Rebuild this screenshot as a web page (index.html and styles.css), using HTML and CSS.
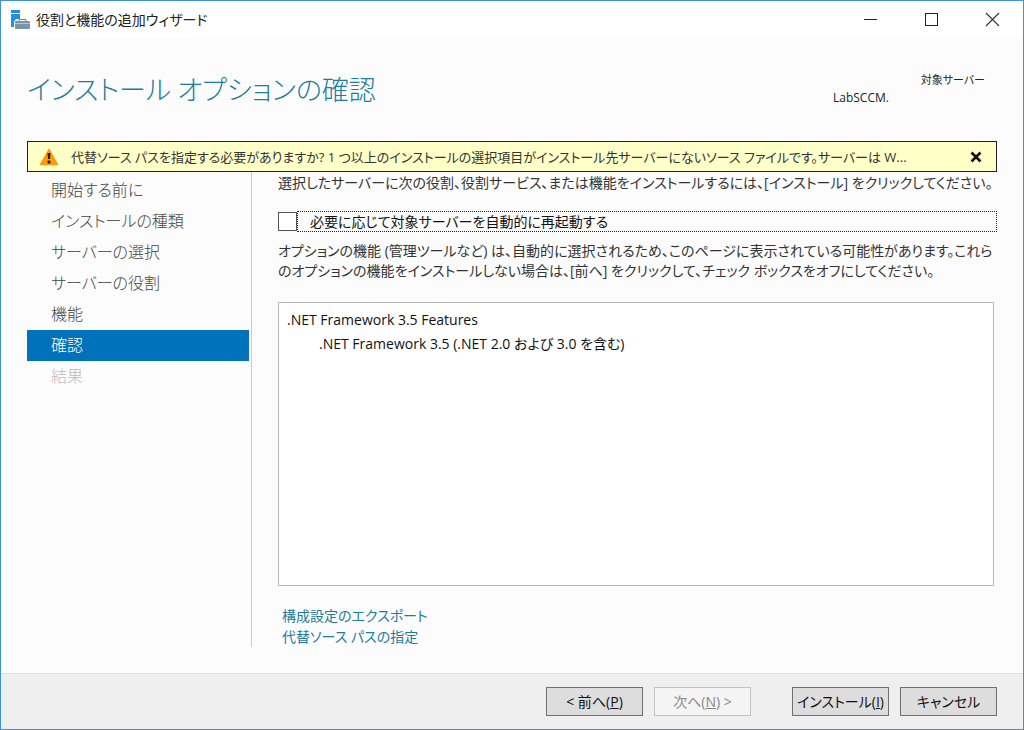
FILE: index.html
```html
<!DOCTYPE html>
<html lang="ja">
<head>
<meta charset="utf-8">
<meta name="viewport" content="width=device-width, initial-scale=1">
<title>役割と機能の追加ウィザード</title>
<link rel="stylesheet" href="styles.css">
</head>
<body>
<div class="window">
  <header class="titlebar">
    <svg class="app-icon" width="20" height="20" viewBox="0 0 20 20" aria-hidden="true">
      <rect x="0" y="0" width="9" height="3" fill="#1f8fe0"/>
      <path d="M0 4h9v5H5l-2 3v5H0z" fill="#1f8fe0"/>
      <path d="M8 11V9.500h7V11" fill="none" stroke="#6b8799"/>
      <rect x="4" y="11" width="15" height="8" rx="1" fill="#7895a8"/>
      <path d="M4 13.500h15" stroke="#b4c6d2"/>
    </svg>
    <span class="window-title">役割と機能の追加ウィザード</span>
    <div class="window-controls">
      <button type="button" aria-label="最小化"><svg width="15" height="15" viewBox="0 0 15 15"><path d="M1 7.500h13" stroke="#222" fill="none"/></svg></button>
      <button type="button" aria-label="最大化"><svg width="15" height="15" viewBox="0 0 15 15"><rect x="1.500" y="1.500" width="12" height="12" stroke="#222" fill="none"/></svg></button>
      <button type="button" aria-label="閉じる"><svg width="15" height="15" viewBox="0 0 15 15"><path d="M1 1l13 13M14 1L1 14" stroke="#333" stroke-width="1.100" fill="none"/></svg></button>
    </div>
  </header>

  <main class="page">
    <div class="heading">
      <h1>インストール オプションの確認</h1>
      <div class="target">
        <span class="target-label">対象サーバー</span>
        <span class="target-name">LabSCCM.</span>
      </div>
    </div>

    <div class="notice" role="alert">
      <svg width="20" height="18" viewBox="0 0 20 18" aria-hidden="true">
        <path d="M10 1.500L18.500 16.500H1.500z" fill="#ff9a0a" stroke="#ff9a0a" stroke-width="1.500" stroke-linejoin="round"/>
        <path d="M8.500 5h3l-.5 6H9z" fill="#222"/>
        <rect x="8.500" y="12.500" width="3" height="3" rx="1" fill="#222"/>
      </svg>
      <span class="notice-text">代替ソース パスを指定する必要がありますか? 1 つ以上のインストールの選択項目がインストール先サーバーにないソース ファイルです。サーバーは W...</span>
      <button type="button" class="notice-close" aria-label="通知を閉じる"><svg width="12" height="12" viewBox="0 0 12 12"><path d="M1.500 1.500l9 9M10.500 1.500l-9 9" stroke="#111" stroke-width="2.600"/></svg></button>
    </div>

    <div class="columns">
      <nav class="steps">
        <a href="#">開始する前に</a>
        <a href="#">インストールの種類</a>
        <a href="#">サーバーの選択</a>
        <a href="#">サーバーの役割</a>
        <a href="#">機能</a>
        <a href="#" class="current" aria-current="step">確認</a>
        <a class="disabled" aria-disabled="true">結果</a>
      </nav>
      <section class="content">
        <p class="intro">選択したサーバーに次の役割、役割サービス、または機能をインストールするには、[インストール] をクリックしてください。</p>
        <div class="restart">
          <input type="checkbox" id="restart">
          <label for="restart">必要に応じて対象サーバーを自動的に再起動する</label>
        </div>
        <p class="note">オプションの機能 (管理ツールなど) は、自動的に選択されるため、このページに表示されている可能性があります。これら<br>のオプションの機能をインストールしない場合は、[前へ] をクリックして、チェック ボックスをオフにしてください。</p>
        <ul class="features">
          <li>.NET Framework 3.5 Features
            <ul><li>.NET Framework 3.5 (.NET 2.0 および 3.0 を含む)</li></ul>
          </li>
        </ul>
        <div class="links">
          <a href="#">構成設定のエクスポート</a>
          <a href="#">代替ソース パスの指定</a>
        </div>
      </section>
    </div>
  </main>

  <footer class="actions">
    <div class="group">
      <button type="button">&lt; 前へ(<u>P</u>)</button>
      <button type="button" disabled>次へ(<u>N</u>) &gt;</button>
    </div>
    <div class="group">
      <button type="button">インストール(<u>I</u>)</button>
      <button type="button">キャンセル</button>
    </div>
  </footer>
</div>
</body>
</html>
```
FILE: styles.css
```css
* { box-sizing: border-box; }

body {
  margin: 0;
  color: #333;
  font-family: "Open Sans", "Noto Sans CJK JP", sans-serif;
  font-size: 14px;
  line-height: 20px;
  font-feature-settings: "palt";
}

button {
  font: inherit;
  font-feature-settings: inherit;
  color: inherit;
}

p, h1, ul { margin: 0; padding: 0; }
ul { list-style: none; }
a { text-decoration: none; }
svg { display: block; flex: none; }

.window {
  display: flex;
  flex-direction: column;
  min-height: 100vh;
  border: 1px solid #3d92db;
  background: #fcfcfc;
}

.titlebar {
  display: flex;
  align-items: center;
  height: 37px;
  padding-left: 10px;
  background: #fff;
}

.window-title { margin-left: 5px; color: #222; }

.window-controls { display: flex; margin-left: auto; }

.window-controls button {
  display: grid;
  place-items: center;
  width: 61px;
  height: 37px;
  padding: 0;
  border: 0;
  background: none;
}

.page {
  display: flex;
  flex: 1;
  flex-direction: column;
  padding: 0 26px 26px;
}

.heading {
  display: flex;
  justify-content: space-between;
  height: 103px;
  padding-top: 31px;
}

h1 {
  color: #1d7d9e;
  font-family: "Noto Sans CJK JP", sans-serif;
  font-size: 27px;
  font-weight: 300;
  line-height: 40px;
  white-space: nowrap;
}

.target {
  display: flex;
  flex-direction: column;
  width: 164px;
  padding-top: 2px;
  color: #222;
  font-size: 12px;
  line-height: 18px;
}

.target-label { align-self: flex-end; margin-right: 12px; font-size: 11px; }

.notice {
  display: flex;
  align-items: center;
  height: 31px;
  padding: 0 14px 0 11px;
  border: 1px solid #222;
  background: #ffffc8;
}

.notice-text {
  flex: 1;
  min-width: 0;
  margin: 0 16px 0 12px;
  overflow: hidden;
  font-size: 13px;
  text-overflow: ellipsis;
  white-space: nowrap;
}

.notice-close { padding: 0; border: 0; background: none; }

.columns { display: flex; flex: 1; }

.steps {
  display: flex;
  flex: none;
  flex-direction: column;
  width: 225px;
  padding: 3px 2px 0 0;
  border-right: 1px solid #ccc;
  font-size: 16px;
  font-weight: 300;
}

.steps a {
  padding-left: 24px;
  color: #444;
  line-height: 31px;
}

.steps .current { background: #0072bc; color: #fff; }
.steps .disabled { color: #bbb; }

.content {
  display: flex;
  flex: 1;
  flex-direction: column;
  min-width: 0;
  padding-left: 26px;
}

.intro { margin-top: 1px; }

.restart {
  display: flex;
  align-items: center;
  margin-top: 18px;
  color: #111;
}

.restart input {
  appearance: none;
  flex: none;
  width: 19px;
  height: 19px;
  margin: 0;
  border: 1px solid #555;
  background: #fff;
}

.restart label {
  flex: 1;
  padding-left: 12px;
  border: 1px dotted #222;
  line-height: 19px;
}

.note { margin-top: 9px; }

.features {
  flex: 1;
  margin: 21px 3px 0 0;
  padding: 5px 8px;
  border: 1px solid #b4b4b4;
  background: #fff;
  color: #111;
  line-height: 24px;
}

.features ul { padding-left: 32px; }

.links {
  display: flex;
  flex-direction: column;
  align-items: flex-start;
  padding: 19px 4px 0;
}

.links a { color: #1d7d9e; line-height: 21px; }

.actions {
  display: flex;
  justify-content: flex-end;
  gap: 41px;
  padding: 13px 26px;
  border-top: 1px solid #ddd;
  background: #efefef;
}

.group { display: flex; gap: 11px; }

.actions button {
  width: 97px;
  height: 29px;
  padding: 0;
  border: 1px solid #707070;
  background: #ddd;
  color: #111;
}

.actions button:disabled {
  border-color: #bfc3c6;
  background: #f4f4f4;
  color: #888;
}
```
